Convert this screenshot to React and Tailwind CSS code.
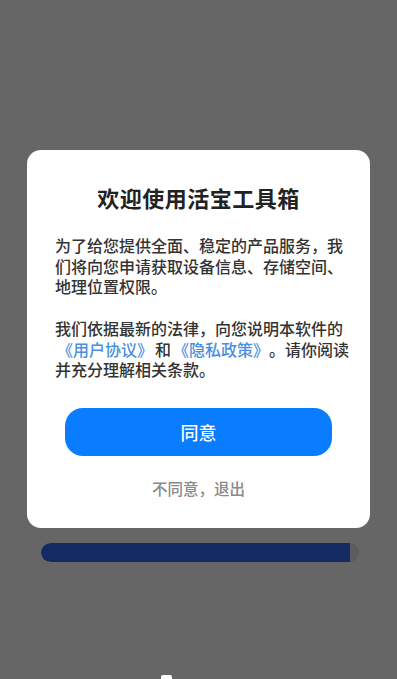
export default function App() {
  const font = { fontFamily: '"Noto Sans CJK SC", "Noto Sans", sans-serif' };
  return (
    <div className="w-[397px] h-[679px] bg-[#666666] overflow-hidden flex flex-col [text-spacing-trim:space-all]" style={font}>
      <div className="mt-[150px] mx-[27px] h-[380px] bg-white rounded-[14px] px-[26px] pt-[32px] flex flex-col">
        <div className="text-[22px] leading-[30px] font-bold text-[#222222] text-center tracking-[0.5px]">欢迎使用活宝工具箱</div>
        <div className="mt-[23px] ml-[2px] text-[16px] leading-[20.5px] font-medium text-[#333333] whitespace-nowrap">
          <div>为了给您提供全面、稳定的产品服务，我</div>
          <div>们将向您申请获取设备信息、存储空间、</div>
          <div>地理位置权限。</div>
        </div>
        <div className="mt-[21.5px] ml-[2px] text-[16px] leading-[20.5px] font-medium text-[#333333] whitespace-nowrap">
          <div>我们依据最新的法律，向您说明本软件的</div>
          <div className="pl-[2px]">
            <span className="text-[#4a8fe0]">《用户协议》</span><span className="px-[2px]">和</span><span className="text-[#4a8fe0]">《隐私政策》</span>。请你阅读
          </div>
          <div>并充分理解相关条款。</div>
        </div>
        <button className="mt-[28.5px] mx-[12px] h-[48px] rounded-[18px] bg-[#0a7cff] text-white text-[18px] font-medium flex items-center justify-center">
          同意
        </button>
        <div className="mt-[22px] text-[15.5px] leading-[20px] font-medium text-[#8a8a8a] text-center">不同意，退出</div>
      </div>
      <div className="mt-[15px] ml-[41px] w-[318px] h-[19px] rounded-full bg-[#5c5c5c] overflow-hidden flex">
        <div className="w-[309px] h-full bg-[#142a63] rounded-l-full"></div>
      </div>
      <div className="mt-[113px] ml-[161px] w-[11px] h-[4px] rounded-t-[2px] bg-white"></div>
    </div>
  );
}
